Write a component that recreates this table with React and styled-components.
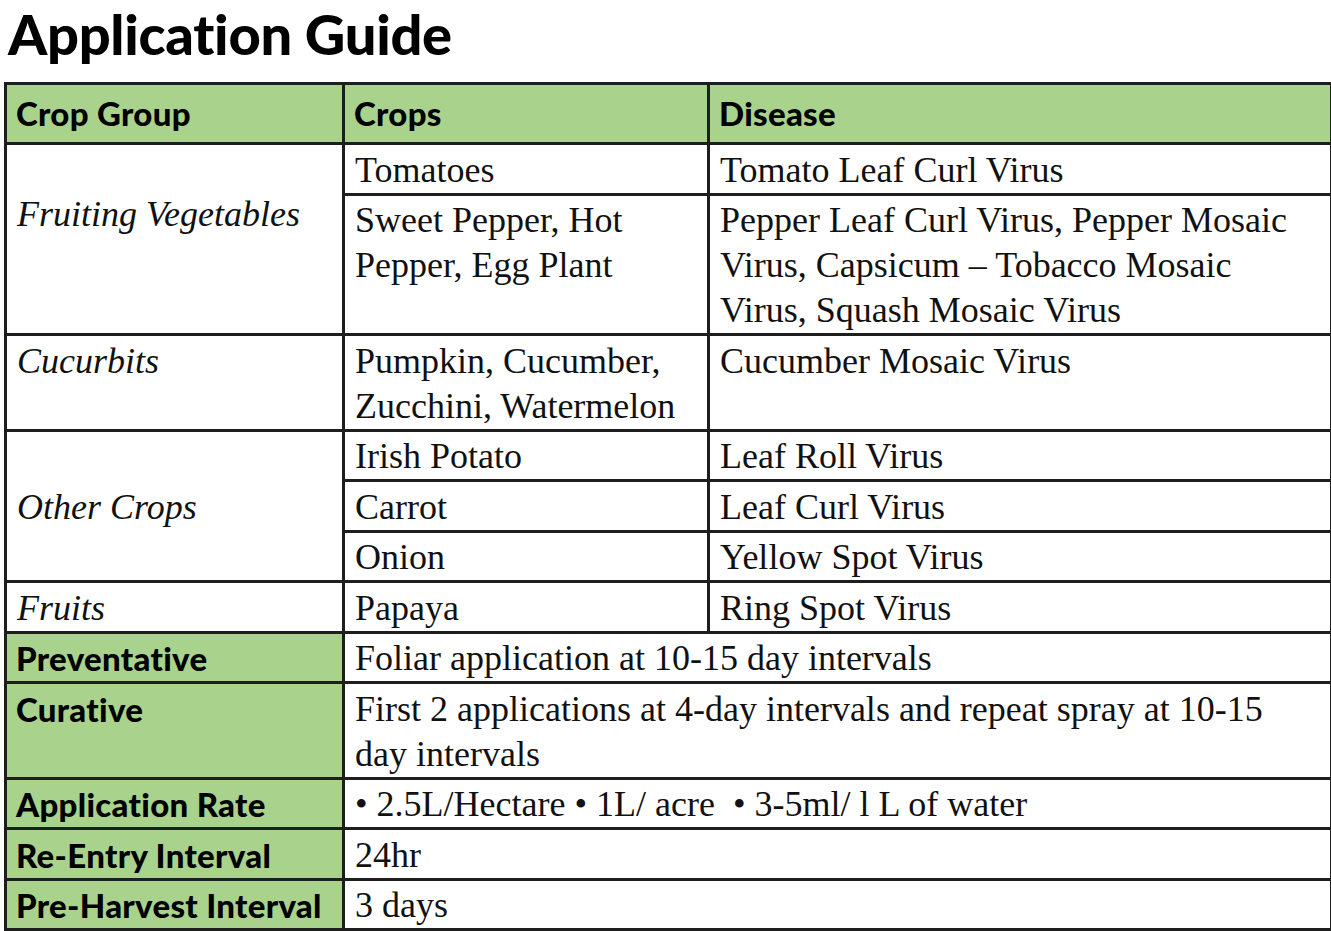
import React from "react";
import styled, { createGlobalStyle } from "styled-components";

const GlobalStyle = createGlobalStyle`
  html, body {
    margin: 0;
    padding: 0;
    background: #ffffff;
  }
`;

const Page = styled.div`
  width: 1331px;
  padding: 0 0 0 4px;
  box-sizing: border-box;
`;

const Title = styled.h1`
  margin: 0;
  padding: 0 0 0 4px;
  height: 84px;
  font-family: Lato, "Liberation Sans", sans-serif;
  font-weight: 900;
  font-size: 56px;
  line-height: 68px;
  letter-spacing: -0.3px;
  font-variant-ligatures: none;
  color: #000;
`;

const Table = styled.table`
  width: 1326px;
  border-collapse: collapse;
  table-layout: fixed;
  color: #111;
  margin-top: -2px;
`;

const Col = styled.col`
  width: ${(p) => p.width}px;
`;

const sansBold = `
  font-family: Lato, "Liberation Sans", sans-serif;
  font-weight: 900;
  font-size: 33px;
  letter-spacing: 0.3px;
  font-variant-ligatures: none;
  white-space: nowrap;
  color: #000;
`;

const Head = styled.th`
  ${sansBold}
  background: #a9d38c;
  border: 3px solid #1e1e1e;
  text-align: left;
  padding: 7px 9px 8px;
  line-height: 42px;
`;

const Label = styled.td`
  ${sansBold}
  background: #a9d38c;
  border: 3px solid #1e1e1e;
  vertical-align: top;
  padding: 2.5px 9px 0;
  line-height: 45px;
`;

const Cell = styled.td`
  border: 3px solid #1e1e1e;
  vertical-align: ${(p) => p.$valign || "top"};
  padding: ${(p) => p.$padTop || 2.5}px 10px 0;
  font-family: "Liberation Serif", "Times New Roman", serif;
  font-style: ${(p) => (p.$italic ? "italic" : "normal")};
  font-size: 36px;
  line-height: 45px;
  background: #fff;
`;

export default function App() {
  return (
    <Page>
      <GlobalStyle />
      <Title>Application Guide</Title>
      <Table>
        <colgroup>
          <Col width={338} />
          <Col width={365} />
          <Col width={623} />
        </colgroup>
        <thead>
          <tr>
            <Head>Crop Group</Head>
            <Head>Crops</Head>
            <Head>Disease</Head>
          </tr>
        </thead>
        <tbody>
          <tr>
            <Cell rowSpan={2} $italic $padTop={47}>
              Fruiting Vegetables
            </Cell>
            <Cell>Tomatoes</Cell>
            <Cell>Tomato Leaf Curl Virus</Cell>
          </tr>
          <tr>
            <Cell>
              Sweet Pepper, Hot
              <br />
              Pepper, Egg Plant
            </Cell>
            <Cell>
              Pepper Leaf Curl Virus, Pepper Mosaic
              <br />
              Virus, Capsicum – Tobacco Mosaic
              <br />
              Virus, Squash Mosaic Virus
            </Cell>
          </tr>
          <tr>
            <Cell $italic>Cucurbits</Cell>
            <Cell>
              Pumpkin, Cucumber,
              <br />
              Zucchini, Watermelon
            </Cell>
            <Cell>Cucumber Mosaic Virus</Cell>
          </tr>
          <tr>
            <Cell rowSpan={3} $italic $valign="middle">
              Other Crops
            </Cell>
            <Cell>Irish Potato</Cell>
            <Cell>Leaf Roll Virus</Cell>
          </tr>
          <tr>
            <Cell>Carrot</Cell>
            <Cell>Leaf Curl Virus</Cell>
          </tr>
          <tr>
            <Cell>Onion</Cell>
            <Cell>Yellow Spot Virus</Cell>
          </tr>
          <tr>
            <Cell $italic>Fruits</Cell>
            <Cell>Papaya</Cell>
            <Cell>Ring Spot Virus</Cell>
          </tr>
          <tr>
            <Label>Preventative</Label>
            <Cell colSpan={2}>Foliar application at 10-15 day intervals</Cell>
          </tr>
          <tr>
            <Label>Curative</Label>
            <Cell colSpan={2}>
              First 2 applications at 4-day intervals and repeat spray at 10-15
              <br />
              day intervals
            </Cell>
          </tr>
          <tr>
            <Label>Application Rate</Label>
            <Cell colSpan={2}>
              • 2.5L/Hectare • 1L/ acre &nbsp;• 3-5ml/ l L of water
            </Cell>
          </tr>
          <tr>
            <Label>Re-Entry Interval</Label>
            <Cell colSpan={2}>24hr</Cell>
          </tr>
          <tr>
            <Label>Pre-Harvest Interval</Label>
            <Cell colSpan={2}>3 days</Cell>
          </tr>
        </tbody>
      </Table>
    </Page>
  );
}
